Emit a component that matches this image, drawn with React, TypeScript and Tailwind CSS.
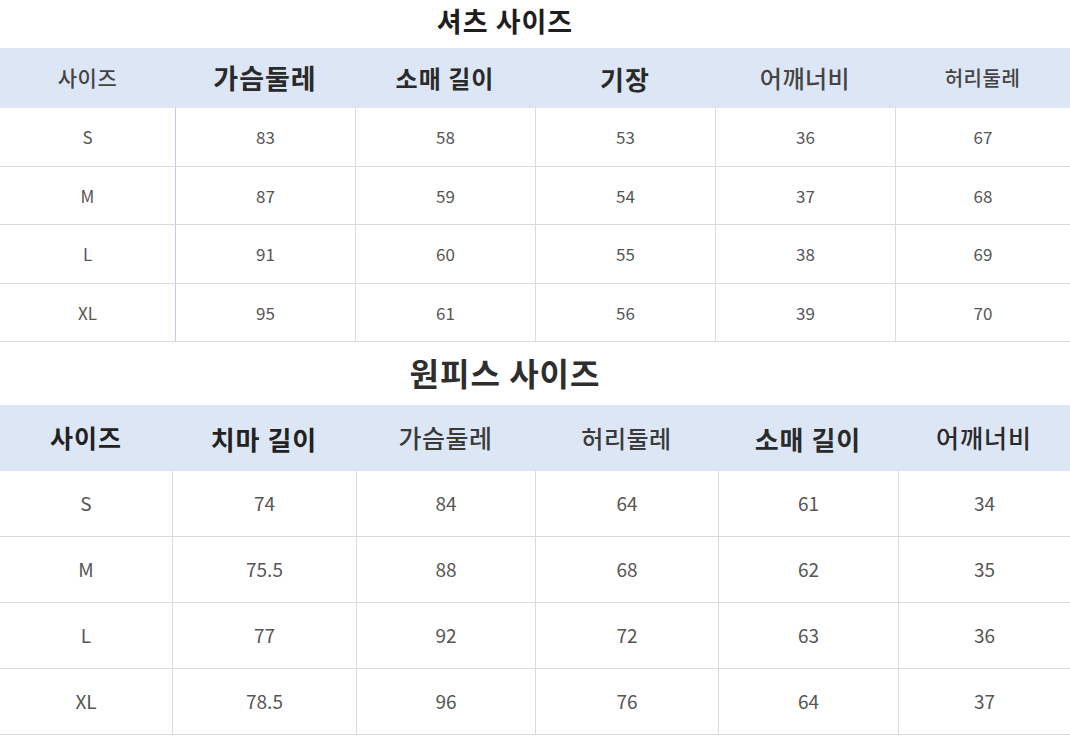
type Head = { label: string; cls: string };

const shirtCols = "grid-cols-[175px_180px_180px_180px_180px_175px]";
const dressCols = "grid-cols-[172px_184px_179px_183px_180px_172px]";

const shirtHead: Head[] = [
  { label: "사이즈", cls: "text-[21px] font-medium text-[#444] tracking-[0.5px]" },
  { label: "가슴둘레", cls: "text-[27px] font-bold text-[#2a2a2a] tracking-[1px]" },
  { label: "소매 길이", cls: "text-[24px] font-bold text-[#2a2a2a] tracking-[1px]" },
  { label: "기장", cls: "text-[26px] font-bold text-[#2a2a2a] tracking-[1px]" },
  { label: "어깨너비", cls: "text-[24px] font-medium text-[#444] tracking-[0.5px]" },
  { label: "허리둘레", cls: "text-[20px] font-medium text-[#444] tracking-[0.5px]" },
];

const shirtRows = [
  ["S", "83", "58", "53", "36", "67"],
  ["M", "87", "59", "54", "37", "68"],
  ["L", "91", "60", "55", "38", "69"],
  ["XL", "95", "61", "56", "39", "70"],
];

const dressHead: Head[] = [
  { label: "사이즈", cls: "text-[25px] font-bold text-[#222] tracking-[1px]" },
  { label: "치마 길이", cls: "text-[26px] font-bold text-[#222] tracking-[1px]" },
  { label: "가슴둘레", cls: "text-[25px] font-medium text-[#3a3a3a] tracking-[0.5px]" },
  { label: "허리둘레", cls: "text-[24px] font-medium text-[#3a3a3a] tracking-[0.5px]" },
  { label: "소매 길이", cls: "text-[26px] font-bold text-[#2a2a2a] tracking-[1px]" },
  { label: "어깨너비", cls: "text-[25px] font-medium text-[#2a2a2a] tracking-[1px]" },
];

const dressRows = [
  ["S", "74", "84", "64", "61", "34"],
  ["M", "75.5", "88", "68", "62", "35"],
  ["L", "77", "92", "72", "63", "36"],
  ["XL", "78.5", "96", "76", "64", "37"],
];

function SizeTable({
  cols,
  head,
  rows,
  headH,
  rowH,
  numCls,
  firstLine,
}: {
  cols: string;
  head: Head[];
  rows: string[][];
  headH: string;
  rowH: string;
  numCls: string;
  firstLine: string;
}) {
  return (
    <div>
      <div className={`grid ${cols} ${headH} bg-[#dde6f5]`}>
        {head.map((h) => (
          <div key={h.label} className={`flex items-center justify-center ${h.cls}`}>
            {h.label}
          </div>
        ))}
      </div>
      {rows.map((r) => (
        <div key={r[0]} className={`grid ${cols} ${rowH} border-b border-[#d9d9e0]`}>
          {r.map((v, i) => (
            <div
              key={i}
              className={`flex items-center justify-center text-[#565656] ${numCls} ${
                i === 0 ? "" : i === 1 ? `border-l ${firstLine}` : "border-l border-[#d9d9e0]"
              }`}
            >
              {v}
            </div>
          ))}
        </div>
      ))}
    </div>
  );
}

export default function App() {
  return (
    <div
      className="w-[1070px] h-[750px] bg-white overflow-hidden"
      style={{ fontFamily: '"Noto Sans CJK KR", "Noto Sans", sans-serif' }}
    >
      <div className="h-[48px] flex items-center justify-center pb-[6px] pr-[60px]">
        <h1 className="text-[27px] font-bold text-[#1e1e1e] tracking-[1px]">셔츠 사이즈</h1>
      </div>
      <SizeTable
        cols={shirtCols}
        head={shirtHead}
        rows={shirtRows}
        headH="h-[60px]"
        rowH="h-[58.5px]"
        numCls="text-[17px]"
        firstLine="border-[#c5cae6]"
      />
      <div className="h-[63px] flex items-center justify-center pb-[4px] pr-[60px]">
        <h2 className="text-[32px] font-bold text-[#2e2e2e] tracking-[1px]">원피스 사이즈</h2>
      </div>
      <SizeTable
        cols={dressCols}
        head={dressHead}
        rows={dressRows}
        headH="h-[66px]"
        rowH="h-[66px]"
        numCls="text-[19px]"
        firstLine="border-[#d9d9e0]"
      />
    </div>
  );
}
